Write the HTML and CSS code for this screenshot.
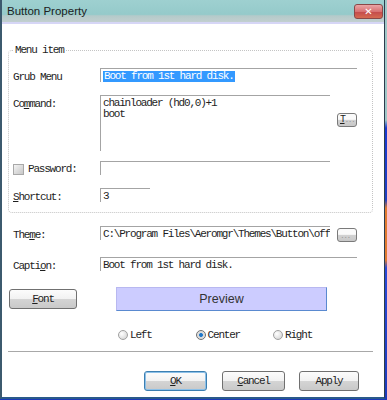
FILE: index.html
```html
<!DOCTYPE html>
<html lang="en">

<head>
    <meta charset="UTF-8" />
    <meta name="viewport" content="width=device-width, initial-scale=1" />
    <title>Button Property</title>
    <link rel="stylesheet" href="styles.css">
</head>

<body>
    <div class="window">
        <div class="title-bar">
            <span class="title">Button Property</span>
            <span class="close-btn">&#x2715;</span>
        </div>

        <div class="content">
            <fieldset class="group">
                <legend>Menu item</legend>

                <div class="row row-grub">
                    <div class="label">Grub Menu</div>
                    <div class="field field-wide"><span class="selected">Boot from 1st hard disk.</span></div>
                </div>

                <div class="row row-command">
                    <div class="label">Co<u>m</u>mand:</div>
                    <div class="field field-area">chainloader (hd0,0)+1<br>boot</div>
                    <div class="small-btn btn-t"><u>T</u><span class="dots">...</span></div>
                </div>

                <div class="row row-password">
                    <div class="label check-label"><span class="checkbox"></span>Password:</div>
                    <div class="field field-mid"></div>
                </div>

                <div class="row row-shortcut">
                    <div class="label"><u>S</u>hortcut:</div>
                    <div class="field field-short">3</div>
                </div>
            </fieldset>

            <div class="row row-theme">
                <div class="label">The<u>m</u>e:</div>
                <div class="field field-mid">C:\Program Files\Aeromgr\Themes\Button\off</div>
                <div class="small-btn btn-browse"><span class="dots">...</span></div>
            </div>

            <div class="row row-caption">
                <div class="label">Capti<u>o</u>n:</div>
                <div class="field field-wide">Boot from 1st hard disk.</div>
            </div>

            <div class="row-preview">
                <div class="btn font-btn"><u>F</u>ont</div>
                <div class="preview">Preview</div>
            </div>

            <div class="align-row">
                <label class="radio-item item-left"><span class="radio"></span>Left</label>
                <label class="radio-item item-center"><span class="radio checked"></span>Center</label>
                <label class="radio-item item-right"><span class="radio"></span>Right</label>
            </div>

            <div class="separator"></div>

            <div class="dialog-buttons">
                <div class="btn btn-ok"><u>O</u>K</div>
                <div class="btn btn-cancel"><u>C</u>ancel</div>
                <div class="btn btn-apply">Apply</div>
            </div>
        </div>
    </div>
</body>

</html>
```

FILE: styles.css
```css
:root {
    --line: #a4a4a4;
    --text: #1e1e1e;
    --select: #3399ff;
}

* {
    box-sizing: border-box;
}

body {
    margin: 0;
    width: 387px;
    height: 400px;
    overflow: hidden;
    background: linear-gradient(#9fc8c8 0, #9fc8c8 30%, #1a3ad0 32%, #2040c0 50%, #e07a30 52%, #e07a30 65%, #2a4ad8 67%, #1c3ab8 100%);
    font-family: 'Liberation Mono', 'Courier New', monospace;
    font-size: 11px;
    letter-spacing: -1.2px;
    color: var(--text);
}

.window {
    width: 385px;
    height: 399px;
    background-color: #ffffff;
    border-left: 2px solid #3c5a6e;
    border-right: 1px solid #2c3c4c;
    border-bottom: 2px solid #2a5a8a;
    display: flex;
    flex-direction: column;
}

.title-bar {
    height: 24px;
    display: flex;
    align-items: flex-start;
    background: linear-gradient(#9ed0d0 0, #95caca 60%, #b4caca 66%, #c2cfcf 91%, #d6d6f6 92%, #d6d6f6 100%);
    padding: 0 1px 0 5px;
}

.title {
    font-family: 'Liberation Sans', sans-serif;
    font-size: 11.5px;
    letter-spacing: 0;
    line-height: 22px;
    color: #202020;
}

.close-btn {
    margin: 4px 0 0 auto;
    width: 29px;
    height: 15px;
    border: 1px solid #8a4848;
    border-radius: 3px;
    background: linear-gradient(#eaa6a6 0, #d87272 50%, #c44c4c 55%, #d66a50 100%);
    color: #ffffff;
    font-family: 'DejaVu Sans', sans-serif;
    font-size: 10px;
    font-weight: bold;
    letter-spacing: 0;
    line-height: 13px;
    text-align: center;
}

.content {
    padding: 0 10px 0 6px;
}

.group {
    margin: 20px 0 0 0;
    padding: 0 0 8px 4px;
    border: 1px dotted #c4c4c4;
    border-radius: 4px;
    min-width: 0;
    width: 365px;
}

.group legend {
    padding: 0 2px;
    line-height: 12px;
}

.row {
    display: flex;
    align-items: flex-start;
}

.label {
    width: 87px;
    flex-shrink: 0;
    padding-top: 3px;
    line-height: 12px;
    white-space: nowrap;
}

.field {
    border-top: 1px solid var(--line);
    border-left: 1px solid var(--line);
    padding: 1px 0 0 2px;
    height: 14px;
    line-height: 12px;
    white-space: nowrap;
    overflow: hidden;
}

.field-wide {
    width: 257px;
}

.field-mid {
    width: 230px;
}

.field-short {
    width: 50px;
    height: 14px;
}

.field-area {
    width: 230px;
    height: 56px;
    padding-top: 2px;
    line-height: 11px;
}

.selected {
    background-color: var(--select);
    color: #ffffff;
    padding: 0 1px;
    line-height: 11px;
    display: inline-block;
}

.row-grub {
    margin-top: 12px;
    height: 27px;
}

.row-command {
    height: 66px;
}

.row-password {
    height: 27px;
}

.row-shortcut {
    height: 16px;
}

.check-label {
    display: flex;
    align-items: center;
    gap: 4px;
    padding-top: 2px;
}

.checkbox {
    width: 11px;
    height: 11px;
    border: 1px solid #a8a8a8;
    background: linear-gradient(135deg, #f4f4f4 0, #d8d8d8 60%, #c8c8c8 100%);
}

.small-btn {
    margin-left: 7px;
    width: 20px;
    height: 14px;
    border: 1px solid #7a7a7a;
    border-radius: 3px;
    background: linear-gradient(#fafafa 0, #fafafa 45%, #d2d2d2 50%, #c8c8c8 100%);
    font-size: 10px;
    line-height: 12px;
    padding-left: 2px;
    letter-spacing: -1.5px;
}

.btn-t {
    margin-top: 18px;
}

.btn-browse {
    margin-top: 2px;
    padding-top: 1px;
}

.dots {
    color: #9a9a9a;
    font-size: 8px;
}

.row-theme {
    margin-top: 13px;
    height: 31px;
    padding-left: 5px;
}

.row-caption {
    height: 30px;
    padding-left: 5px;
}

.row-preview {
    display: flex;
    align-items: flex-start;
    height: 24px;
}

.btn {
    height: 20px;
    border: 1px solid #707070;
    border-radius: 3px;
    background: linear-gradient(#fcfcfc 0, #f2f2f2 48%, #d4d4d4 52%, #c9c9c9 100%);
    text-align: center;
    line-height: 18px;
}

.font-btn {
    margin: 2px 0 0 1px;
    width: 68px;
}

.preview {
    margin-left: 39px;
    width: 211px;
    height: 24px;
    background-color: #ccccff;
    border: 1px solid #b8b8f0;
    border-right-color: #5a8ad0;
    border-bottom-color: #5a8ad0;
    text-align: center;
    font-family: 'Liberation Sans', sans-serif;
    font-size: 12.5px;
    letter-spacing: 0;
    line-height: 22px;
    color: #333333;
}

.align-row {
    display: flex;
    align-items: center;
    margin-top: 18px;
    height: 12px;
}

.radio-item {
    display: flex;
    align-items: center;
    gap: 2px;
}

.item-left {
    margin-left: 110px;
}

.item-center {
    margin-left: 44px;
}

.item-right {
    margin-left: 33px;
}

.radio {
    width: 10px;
    height: 10px;
    border-radius: 50%;
    border: 1px solid #a0a0a0;
    background: radial-gradient(circle at 35% 35%, #ffffff 0, #e2e2e2 60%, #c8c8c8 100%);
}

.radio.checked {
    background: radial-gradient(circle, #1a6fc0 0, #2a80d0 30%, #d8d8d8 40%, #eaeaea 100%);
    border-color: #707070;
}

.separator {
    margin-top: 10px;
    width: 365px;
    border-top: 1px solid #a8a8a8;
}

.dialog-buttons {
    display: flex;
    margin-top: 19px;
}

.btn-ok {
    margin-left: 136px;
    width: 63px;
    border-color: #3c7fb1;
    box-shadow: inset 0 0 0 1px #8cc0e8;
}

.btn-cancel {
    margin-left: 15px;
    width: 63px;
}

.btn-apply {
    margin-left: 14px;
    width: 60px;
}
```
